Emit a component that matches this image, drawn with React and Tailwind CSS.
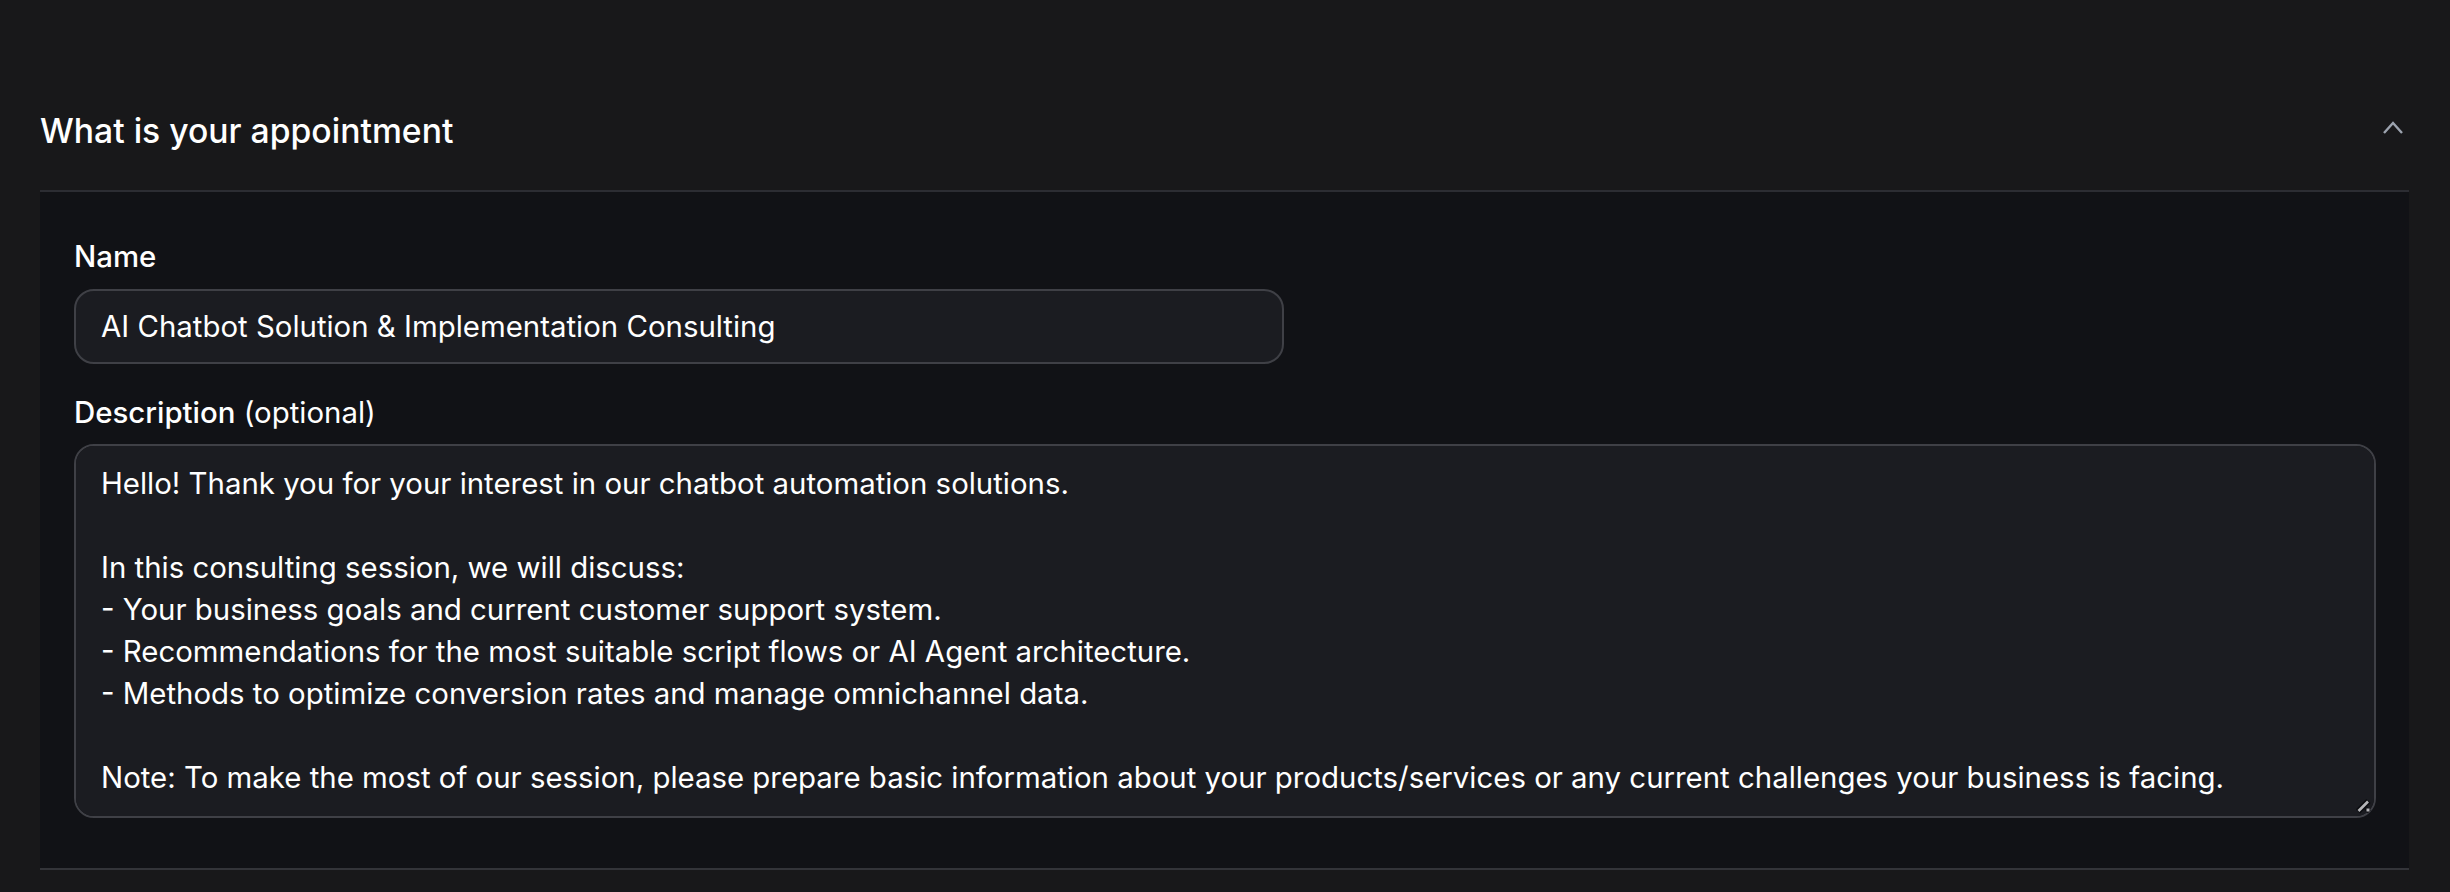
export default function App() {
  return (
    <div className="min-h-[892px] bg-[#18181a] font-['Inter',sans-serif] text-white">
      <div className="pt-[72px] pr-[41px] pl-10">
        <div className="flex h-[120px] items-center justify-between border-b-2 border-[#2c2d33]">
          <h2 className="text-[33.7px] leading-none font-medium">What is your appointment</h2>
          <svg className="mr-[6px] mb-2 h-[13px] w-5 text-[#9ca3af]" viewBox="0 0 20 13" fill="none" stroke="currentColor" strokeWidth="2.4"><path d="M1 12 L10 2 L19 12" /></svg>
        </div>
        <div className="border-b-2 border-[#333439] bg-[#111216] pt-[45px] pr-[33px] pb-[50px] pl-[34px]">
          <label className="block text-[29.4px] leading-[40px] font-medium">Name</label>
          <div className="mt-[12px] flex h-[75px] w-[1210px] items-center rounded-[20px] border-2 border-[#3f4046] bg-[#1b1c21] pt-[2px] pr-[26px] pl-[25px] text-[29.4px]">AI Chatbot Solution &amp; Implementation Consulting</div>
          <label className="mt-[29px] block text-[29.4px] leading-[40px]"><span className="font-medium">Description</span> (optional)</label>
          <div className="relative mt-[11px]">
            <textarea readOnly className="block h-[374px] w-full resize-none rounded-[20px] border-2 border-[#3f4046] bg-[#1b1c21] pt-[17px] pr-[26px] pb-[18px] pl-[25px] text-[29.4px] leading-[42px] outline-none" defaultValue={"Hello! Thank you for your interest in our chatbot automation solutions.\n\nIn this consulting session, we will discuss:\n- Your business goals and current customer support system.\n- Recommendations for the most suitable script flows or AI Agent architecture.\n- Methods to optimize conversion rates and manage omnichannel data.\n\nNote: To make the most of our session, please prepare basic information about your products/services or any current challenges your business is facing."} />
            <svg className="absolute right-[4px] bottom-[4px] h-4 w-4" viewBox="0 0 16 16" fill="none">
              <path d="M2 13.5 L12.5 3" stroke="#0c0d10" strokeWidth="6" />
              <path d="M2.5 13 L12 3.5" stroke="#b5b5b8" strokeWidth="2.6" />
              <path d="M10 13.5 L13 10.5" stroke="#0c0d10" strokeWidth="5" />
              <rect x="10.5" y="10.5" width="3" height="3" fill="#b5b5b8" />
            </svg>
          </div>
        </div>
      </div>
    </div>
  );
}
